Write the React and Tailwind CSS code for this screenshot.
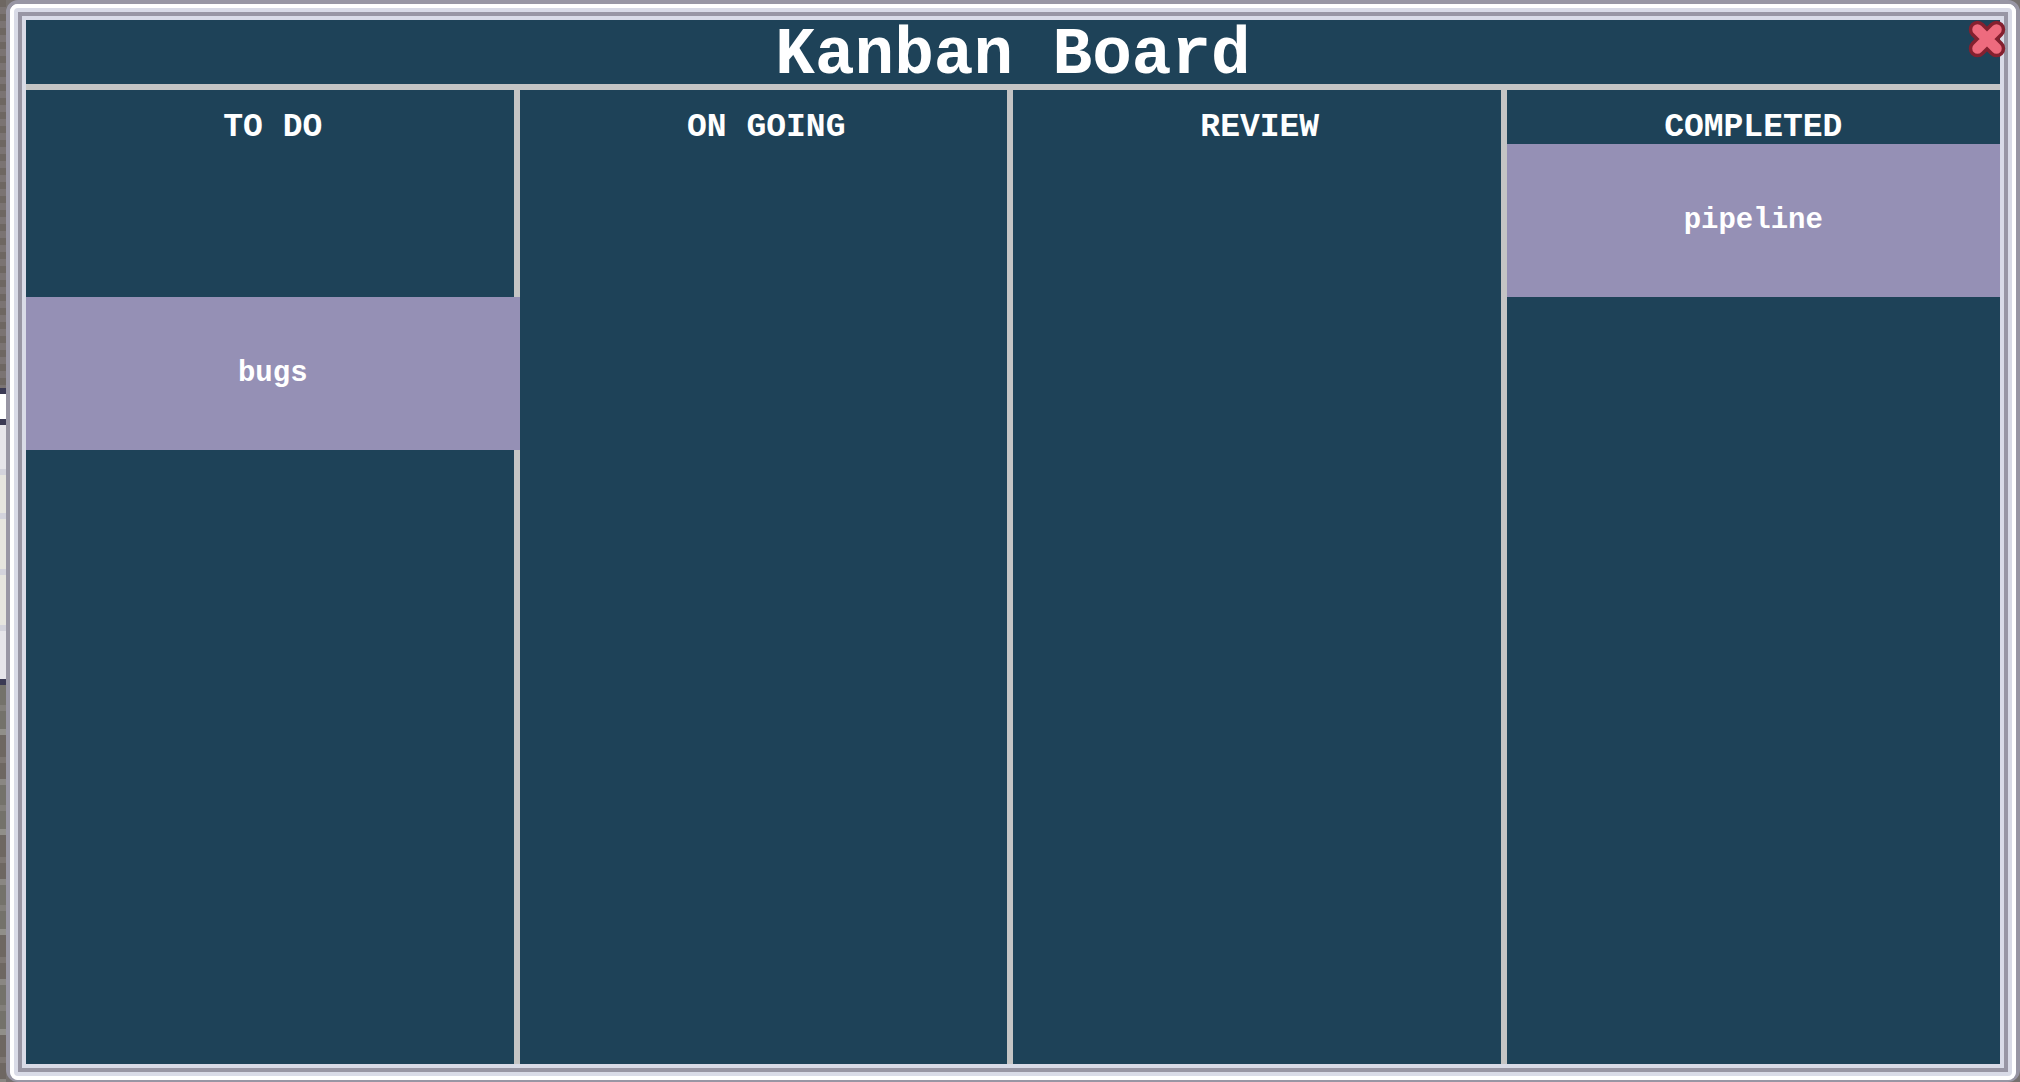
const columns = [
  { title: 'TO DO', tasks: [null, 'bugs'] },
  { title: 'ON GOING', tasks: [] },
  { title: 'REVIEW', tasks: [] },
  { title: 'COMPLETED', tasks: ['pipeline'] },
];

function CloseIcon() {
  return (
    <svg viewBox="0 0 38 38" className="block size-full" aria-hidden="true" fill="none" strokeLinecap="round">
      <path d="M9.5 9.5 28.5 28.5M28.5 9.5 9.5 28.5" stroke="#84202f" strokeWidth="17.5" />
      <path d="M9.5 9.5 28.5 28.5M28.5 9.5 9.5 28.5" stroke="#ee6b7e" strokeWidth="10.5" />
    </svg>
  );
}

// Slice of the room that stays visible beside the dialog.
function Backdrop() {
  return (
    <div className="flex w-[6px] shrink-0 flex-col" aria-hidden="true">
      <div className="h-[388px] bg-[repeating-linear-gradient(to_bottom,#6e6762_0_7px,#7b7473_7px_14px)]" />
      <div className="h-[37px] border-y-6 border-[#3b3a54] bg-white" />
      <div className="h-[260px] border-b-6 border-[#3b3a54] bg-[repeating-linear-gradient(to_bottom,#e6e5ea_0_44px,#d3d3dc_44px_50px,#e6e5df_50px_88px,#d3d3dc_88px_94px,#e6e5df_94px_144px,#d3d3dc_144px_150px,#e6e5df_150px_200px,#d3d3dc_200px_206px,#e6e5ea_206px_260px)]" />
      <div className="grow bg-[repeating-linear-gradient(to_bottom,#74726b_0_20px,#827f7a_20px_26px,#74726b_26px_44px,#918f8a_44px_50px,#6e6762_50px_72px,#7d7672_72px_78px,#6e6762_78px_94px,#8a8783_94px_100px)]" />
    </div>
  );
}

function Column({ title, tasks, last }) {
  return (
    <section className="relative flex min-w-0 flex-1 flex-col">
      {!last && <div className="absolute inset-y-0 right-0 w-[6px] bg-[#c4c4c4]" />}
      <h2 className="flex h-[54px] items-end justify-center text-[33px] leading-8 font-bold">{title}</h2>
      {tasks.map((task, i) =>
        task ? (
          <article key={i} className="relative flex h-[153px] items-center justify-center bg-[#9590b5] text-[29px] leading-9 font-bold">
            {task}
          </article>
        ) : (
          <div key={i} className="h-[153px]" />
        )
      )}
    </section>
  );
}

export default function App() {
  return (
    <div className="flex h-screen overflow-hidden bg-[#76716f] font-['Courier_New','Liberation_Mono',monospace] text-white">
      <Backdrop />
      <div role="dialog" aria-labelledby="board-title" className="flex grow rounded-xl border-4 border-b-2 border-[#9896a4] bg-white">
        <div className="flex grow rounded-lg border-4 border-white">
          <div className="flex grow rounded-sm border-4 border-[#d9dbe7]">
            <div className="flex grow border-4 border-[#9896a4]">
              <div className="relative flex grow flex-col border-4 border-[#d9dbe7] bg-[#1e4258]">
                <header className="flex h-[70px] items-end justify-center border-b-6 border-[#c4c4c4]">
                  <h1 id="board-title" className="text-[66px] leading-14 font-bold">Kanban Board</h1>
                </header>
                <button type="button" aria-label="Close" className="absolute top-0 -right-1.5 size-[38px]">
                  <CloseIcon />
                </button>
                <main className="flex grow">
                  {columns.map((c, i) => (
                    <Column key={c.title} {...c} last={i === columns.length - 1} />
                  ))}
                </main>
              </div>
            </div>
          </div>
        </div>
      </div>
    </div>
  );
}
